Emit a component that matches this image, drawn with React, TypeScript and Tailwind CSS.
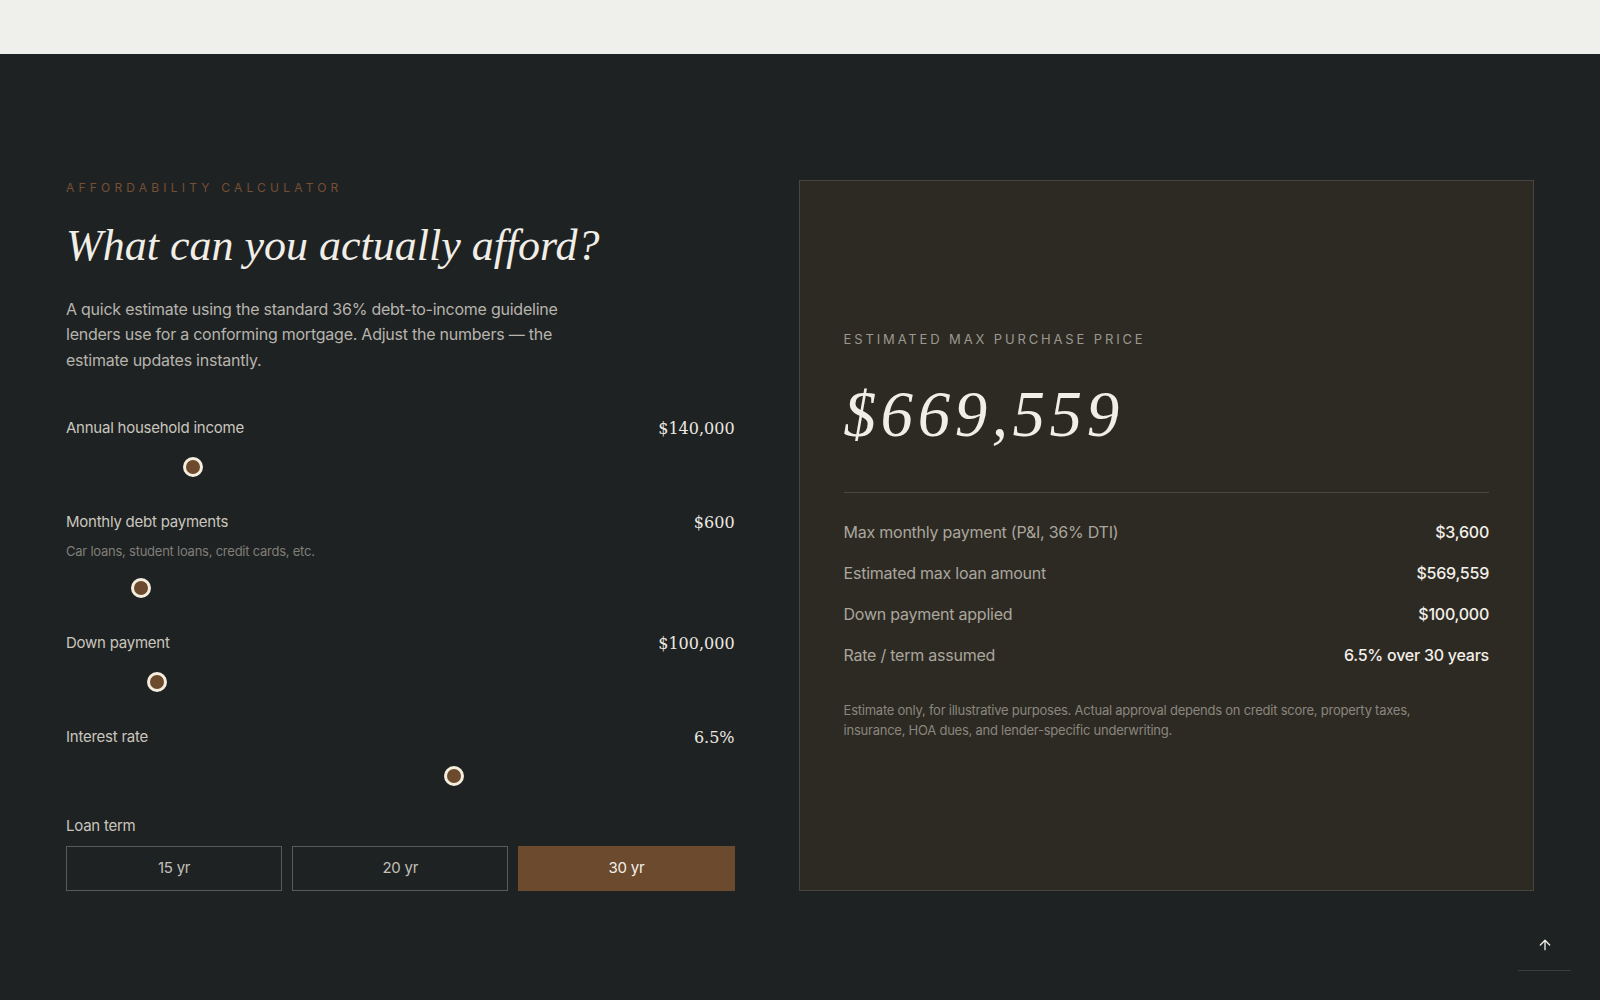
import { useMemo, useState } from "react";
import { ArrowUp } from "lucide-react";

const SANS = "font-['Inter','Liberation_Sans',sans-serif]";

const TERMS = [15, 20, 30] as const;

const usd = (value: number) =>
  "$" + Math.round(value).toLocaleString("en-US");

type SliderProps = {
  label: string;
  hint?: string;
  value: number;
  min: number;
  max: number;
  step: number;
  display: string;
  onChange: (value: number) => void;
};

function Slider({ label, hint, value, min, max, step, display, onChange }: SliderProps) {
  const frac = (value - min) / (max - min);
  return (
    <div className="flex flex-col">
      <div className="flex h-6 items-center justify-between">
        <span className="text-[15px] text-[#c9c6be]">{label}</span>
        <span className="font-['DejaVu_Serif',serif] text-[16px] tracking-normal text-[#ece9e1]">{display}</span>
      </div>
      {hint && <p className="mt-1.5 text-[13px] leading-5 text-[#7f7e78]">{hint}</p>}
      <div className={hint ? "relative mt-[17px] h-5" : "relative mt-4 h-5"}>
        <input
          type="range"
          min={min}
          max={max}
          step={step}
          value={value}
          onChange={(event) => onChange(Number(event.target.value))}
          className="absolute inset-0 z-10 h-5 w-full cursor-pointer opacity-0"
        />
        <div
          className="pointer-events-none absolute top-0 h-5 w-5 rounded-full border-[3px] border-[#f5eddd] bg-[#6b4a2e]"
          style={{ left: `calc(${frac} * (100% - 20px))` }}
        />
      </div>
    </div>
  );
}

export default function App() {
  const [income, setIncome] = useState(140000);
  const [debt, setDebt] = useState(600);
  const [down, setDown] = useState(100000);
  const [rate, setRate] = useState(6.5);
  const [term, setTerm] = useState<number>(30);

  const { monthly, loan } = useMemo(() => {
    const monthlyMax = Math.max((income / 12) * 0.36 - debt, 0);
    const r = rate / 100 / 12;
    const n = term * 12;
    const pv = r === 0 ? monthlyMax * n : (monthlyMax * (1 - Math.pow(1 + r, -n))) / r;
    return { monthly: monthlyMax, loan: pv };
  }, [income, debt, rate, term]);

  return (
    <div className={`min-h-screen bg-[#1f2223] tracking-[-0.015em] ${SANS}`}>
      <header className="h-[54px] bg-[#eff0eb]" />
      <section className="px-[66px] pt-[126px] pb-[100px]">
        <div className="grid grid-cols-[1fr_1.1fr] gap-16">
          <div className="flex flex-col">
            <p className="text-xs leading-4 tracking-[0.35em] text-[#764f34]">AFFORDABILITY CALCULATOR</p>
            <h1 className="mt-6 font-['Liberation_Serif',serif] text-[44px] leading-[1.2] tracking-normal italic text-[#f1eee7]">
              What can you actually afford?
            </h1>
            <p className="mt-6 max-w-[525px] text-base leading-[1.6] text-[#b6b4ad]">
              A quick estimate using the standard 36% debt-to-income guideline lenders use for a
              conforming mortgage. Adjust the numbers — the estimate updates instantly.
            </p>

            <div className="mt-[43px] flex flex-col gap-[34px]">
              <Slider
                label="Annual household income"
                value={income}
                min={30000}
                max={640000}
                step={5000}
                display={usd(income)}
                onChange={setIncome}
              />
              <Slider
                label="Monthly debt payments"
                hint="Car loans, student loans, credit cards, etc."
                value={debt}
                min={0}
                max={6000}
                step={50}
                display={usd(debt)}
                onChange={setDebt}
              />
              <Slider
                label="Down payment"
                value={down}
                min={0}
                max={800000}
                step={5000}
                display={usd(down)}
                onChange={setDown}
              />
              <Slider
                label="Interest rate"
                value={rate}
                min={3}
                max={9}
                step={0.125}
                display={`${rate}%`}
                onChange={setRate}
              />
              <div className="-mt-1 flex flex-col">
                <span className="text-[15px] leading-5 text-[#c9c6be]">Loan term</span>
                <div className="mt-[10px] grid grid-cols-3 gap-[10px]">
                  {TERMS.map((value) => (
                    <button
                      key={value}
                      onClick={() => setTerm(value)}
                      className={
                        value === term
                          ? "h-[45px] border border-[#6b4a2e] bg-[#6b4a2e] text-[15px] text-[#f4f0e8]"
                          : "h-[45px] border border-[#5a5b58] text-[15px] text-[#c2c0ba]"
                      }
                    >
                      {value} yr
                    </button>
                  ))}
                </div>
              </div>
            </div>
          </div>

          <div className="flex flex-col justify-center border border-[#48453e] bg-[#2d2a24] px-11">
            <p className="text-[13px] leading-4 tracking-[0.22em] text-[#9b988f]">ESTIMATED MAX PURCHASE PRICE</p>
            <p className="mt-8 font-['Liberation_Serif',serif] text-[65px] leading-[1.1] tracking-[0.07em] italic text-[#f1eee7]">
              {usd(loan + down)}
            </p>
            <div className="mt-[42px] h-px bg-[#4a4740]" />
            <dl className="mt-[18px] flex flex-col text-base">
              {[
                ["Max monthly payment (P&I, 36% DTI)", usd(monthly)],
                ["Estimated max loan amount", usd(loan)],
                ["Down payment applied", usd(down)],
                ["Rate / term assumed", `${rate}% over ${term} years`],
              ].map(([label, value]) => (
                <div key={label} className="flex items-center justify-between py-[8.5px] leading-6">
                  <dt className="text-[#aaa69c]">{label}</dt>
                  <dd className="font-medium text-[#f3f0e9]">{value}</dd>
                </div>
              ))}
            </dl>
            <p className="mt-[25px] max-w-[600px] text-[13px] leading-5 text-[#8a867d]">
              Estimate only, for illustrative purposes. Actual approval depends on credit score, property
              taxes, insurance, HOA dues, and lender-specific underwriting.
            </p>
          </div>
        </div>
      </section>
      <button className="fixed right-[29px] bottom-[29px] flex h-[52px] w-[53px] items-center justify-center border-b border-[#3b3e3f] text-[#f1eee7]">
        <ArrowUp size={16} strokeWidth={2} />
      </button>
    </div>
  );
}
